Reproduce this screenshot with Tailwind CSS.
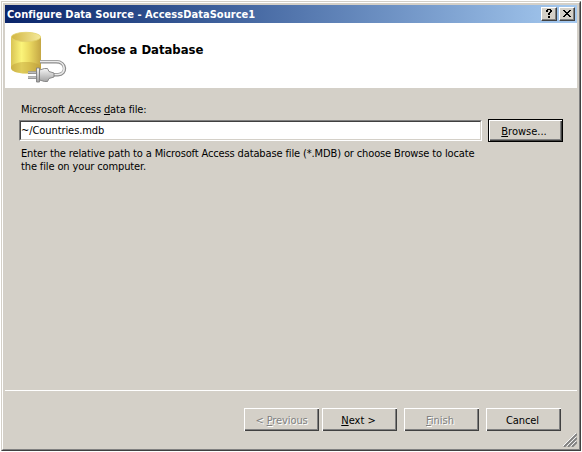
<!DOCTYPE html>
<html lang="en">
<head>
<meta charset="utf-8">
<title>Configure Data Source</title>
<script src="https://cdn.jsdelivr.net/npm/@tailwindcss/browser@4"></script>
</head>
<body class="w-[582px] h-[452px] overflow-hidden bg-white pt-px pl-px font-['DejaVu_Sans_Condensed','DejaVu_Sans',sans-serif] [font-stretch:condensed] text-[11px] leading-[13px] text-black">
<div class="w-[580px] h-[450px] border border-t-[#d4d0c8] border-l-[#d4d0c8] border-r-[#404040] border-b-[#404040]">
<div class="relative w-full h-full border border-t-white border-l-white border-r-[#808080] border-b-[#808080] bg-[#d4d0c8] p-[2px] flex flex-col">
  <header class="h-[18px] shrink-0 bg-linear-to-r from-[#0a246a] to-[#a6caf0] flex items-center pl-[2px] pr-[2px] text-white font-bold whitespace-nowrap">
    <span id="title" class="flex-1 tracking-[0.04px]">Configure Data Source - AccessDataSource1</span>
    <button class="w-4 h-[14px] bg-[#d4d0c8] border border-t-white border-l-white border-r-[#404040] border-b-[#404040] shadow-[inset_-1px_-1px_#808080]" aria-label="Help">
      <svg class="block" width="14" height="12" shape-rendering="crispEdges"><path d="M4 2h1v-1h4v1h1v2h-1v1h-1v2h-2v-2h1v-1h1v-2h-2v2h-2zM6 8h2v2h-2z"/></svg>
    </button>
    <button class="ml-[2px] w-4 h-[14px] bg-[#d4d0c8] border border-t-white border-l-white border-r-[#404040] border-b-[#404040] shadow-[inset_-1px_-1px_#808080]" aria-label="Close">
      <svg class="block" width="14" height="12" shape-rendering="crispEdges"><path d="M3 2h2v1h1v1h2v-1h1v-1h2v1h-1v1h-1v1h-1v1h1v1h1v1h1v1h-2v-1h-1v-1h-2v1h-1v1h-2v-1h1v-1h1v-1h1v-1h-1v-1h-1v-1h-1z"/></svg>
    </button>
  </header>
  <section class="h-[65px] shrink-0 bg-white flex">
    <svg class="block shrink-0 ml-[5px] mt-[8px]" width="58" height="54" viewBox="10 31 58 54">
      <defs>
        <linearGradient id="body"><stop offset="0" stop-color="#d9c455"/><stop offset=".35" stop-color="#fbf47a"/><stop offset=".6" stop-color="#ecdb62"/><stop offset="1" stop-color="#c4a644"/></linearGradient>
        <linearGradient id="lid"><stop offset="0" stop-color="#d2b643"/><stop offset="1" stop-color="#f5ea9c"/></linearGradient>
        <linearGradient id="plug" x2="0" y2="1"><stop offset="0" stop-color="#f8f8f8"/><stop offset="1" stop-color="#a0a0a0"/></linearGradient>
      </defs>
      <path d="M11 37v31c0 3 6 5.500 15 5.500s15-2.500 15-5.500V37z" fill="url(#body)"/>
      <path d="M11 67c1-3 7-5 15-5s14 2 15 5v1c0 3-6 5.500-15 5.500s-15-2.500-15-5.500z" fill="#bd9c35" opacity=".45"/>
      <ellipse cx="26" cy="37" rx="14.700" ry="4.700" fill="url(#lid)" stroke="#e2d26c" stroke-width=".8"/>
      <path d="M40 61.700h16c11 0 11 13 2 13h-5" fill="none" stroke="#8c8c8c" stroke-width="3.400"/>
      <path d="M40 61.500h16c10.500 0 10.500 13 2 13h-5" fill="none" stroke="#ebebeb" stroke-width="1.700"/>
      <path d="M28 72.500h9M28 77.500h9" stroke="#777" stroke-width="2.300"/>
      <path d="M28 72.200h8M28 77.200h8" stroke="#ddd"/>
      <path d="M36.500 68h3v14h-3zM39.500 70l5-1.500h3l1.500 3 5 1.500v4l-5 1.500-1.500 3h-3l-5-1.500z" fill="url(#plug)" stroke="#808080" stroke-width=".9"/>
    </svg>
    <h1 id="heading" class="ml-[10px] mt-[19px] text-[13px] leading-[16px] font-bold whitespace-nowrap tracking-[-0.05px]">Choose a Database</h1>
  </section>
  <main class="h-[302px] shrink-0 pl-[14px] pt-[15px]">
    <label class="block ml-[2px] h-[17px] tracking-[-0.13px]" for="path"><span id="label">Microsoft Access <u>d</u>ata file:</span></label>
    <div class="flex">
      <div class="w-[463px] h-[21px] bg-white border border-t-[#808080] border-l-[#808080] border-r-white border-b-white">
        <div class="w-full h-full border border-t-[#404040] border-l-[#404040] border-r-[#d4d0c8] border-b-[#d4d0c8] leading-[18px] tracking-[-0.08px]"><span id="path">~/Countries.mdb</span></div>
      </div>
      <button class="ml-[6px] -mt-px w-[75px] h-[23px] border border-black bg-[#d4d0c8] shadow-[inset_1px_1px_white,inset_-1px_-1px_#404040,inset_-2px_-2px_#808080] pr-[3px] pt-[2px]"><span id="browse"><u>B</u>rowse...</span></button>
    </div>
    <p class="ml-[2px] mt-[5px] whitespace-nowrap tracking-[-0.13px]"><span id="p1">Enter the relative path to a Microsoft Access database file (*.MDB) or choose Browse to locate</span><br><span id="p2">the file on your computer.</span></p>
  </main>
  <footer class="h-[57px] shrink-0">
    <div class="border-t border-white pt-[17px] flex pl-[239px]">
      <button class="w-[75px] h-[23px] shadow-[inset_1px_1px_white,inset_-1px_-1px_#404040,inset_-2px_-2px_#808080] text-[#808080] [text-shadow:1px_1px_white] pt-px"><span id="prev" class="tracking-[-0.1px]">&lt; <u>P</u>revious</span></button>
      <button class="ml-[3px] w-[75px] h-[23px] shadow-[inset_1px_1px_white,inset_-1px_-1px_#404040,inset_-2px_-2px_#808080] pt-px pr-[2px]"><span id="next"><u>N</u>ext &gt;</span></button>
      <button class="ml-[7px] w-[75px] h-[23px] shadow-[inset_1px_1px_white,inset_-1px_-1px_#404040,inset_-2px_-2px_#808080] text-[#808080] [text-shadow:1px_1px_white] pt-px pr-[3px]"><span id="finish"><u>F</u>inish</span></button>
      <button class="ml-[7px] w-[75px] h-[23px] shadow-[inset_1px_1px_white,inset_-1px_-1px_#404040,inset_-2px_-2px_#808080] pt-px pr-[2px]"><span id="cancel" class="tracking-[-0.1px]">Cancel</span></button>
    </div>
  </footer>
  <svg class="absolute right-[2px] bottom-[2px]" width="14" height="14" fill="none"><path d="M0 13L13 0M4 13L13 4M8 13L13 8" stroke="white"/><path d="M1 14L14 1M5 14L14 5M9 14L14 9" stroke="#808080" stroke-width="1.800"/></svg>
</div>
</div>
</body>
</html>
